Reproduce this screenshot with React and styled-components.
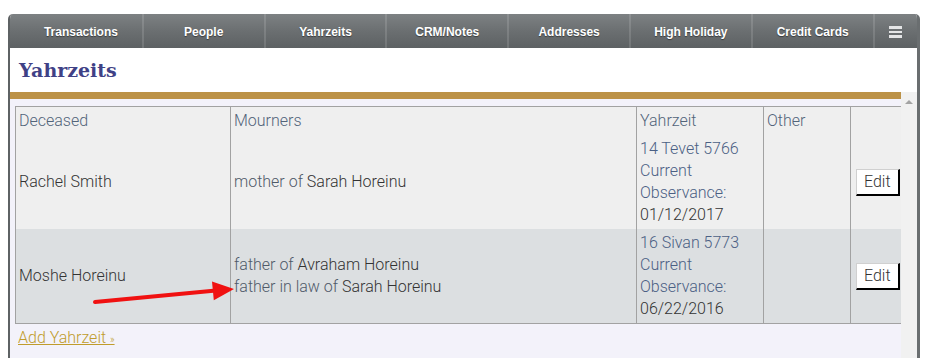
import React from 'react';
import styled, { createGlobalStyle } from 'styled-components';

const GlobalStyle = createGlobalStyle`
    html, body {
        margin:0;
        padding:0;
        background:#ffffff;
    }
    body {
        font-family: Roboto, "Liberation Sans", Arial, sans-serif;
    }
`;

const Page = styled.div`
    position:relative;
    padding:14px 9px 0 8px;
    height:358px;
    overflow:hidden;
    box-sizing:border-box;
`;

const Frame = styled.div`
    display:flex;
    flex-direction:column;
    border-left:2px solid #5e6264;
    border-right:3px solid #6a6e70;
    border-radius:5px 5px 0 0;
    overflow:hidden;
    height:380px;
    background:#ffffff;
`;

const NavBar = styled.div`
    display:flex;
    height:34px;
    padding-left:10px;
    background:linear-gradient(to bottom, #7d8183 0%, #6b6f71 50%, #5d6163 100%);
`;

const NavItem = styled.div`
    width:${props => props.grow ? 'auto' : '121.8px'};
    flex:${props => props.grow ? '1' : 'none'};
    box-sizing:border-box;
    display:flex;
    align-items:center;
    justify-content:center;
    padding-top:2px;
    border-left:${props => props.first ? 'none' : '2px solid rgba(255,255,255,0.13)'};
    color:#ffffff;
    font-family:"Liberation Sans", Arial, sans-serif;
    font-weight:bold;
    font-size:12px;
    text-shadow:0 1px 1px rgba(0,0,0,0.45);
`;

const Burger = styled.div`
    display:flex;
    flex-direction:column;
    gap:2px;
    span {
        display:block;
        width:13px;
        height:2.5px;
        background:#e4e5e6;
    }
`;

const Header = styled.div`
    height:44px;
    box-sizing:border-box;
    padding:9px 0 0 9px;
`;

const Title = styled.h1`
    margin:0;
    font-family:"DejaVu Serif", "Liberation Serif", serif;
    font-weight:bold;
    font-size:19px;
    line-height:26px;
    color:#3f4186;
`;

const Body = styled.div`
    display:flex;
    flex:1;
    min-height:0;
`;

const Content = styled.div`
    flex:1;
    min-width:0;
    overflow:hidden;
    border-top:7px solid #bc9247;
    background:#f3f2fa;
    padding:7px 0 0 5px;
`;

const ScrollBar = styled.div`
    width:16px;
    background:#f1f1f1;
    display:flex;
    justify-content:center;
    padding-top:8px;
    box-sizing:border-box;
`;

const ScrollArrow = styled.div`
    width:0;
    height:0;
    border-left:4px solid transparent;
    border-right:4px solid transparent;
    border-bottom:4px solid #a3a3a3;
`;

const Table = styled.table`
    border-collapse:collapse;
    table-layout:fixed;
    width:890px;
    border:1px solid #a2a2a2;
    font-family:Roboto, "Liberation Sans", sans-serif;
    font-weight:300;
    font-size:16px;
    line-height:22px;
    color:#333333;
`;

const Row = styled.tr`
    background:${props => props.alt ? '#dcdfe1' : '#efefef'};
`;

const HeadCell = styled.td`
    border-left:1px solid #a2a2a2;
    padding:3px 3px;
    vertical-align:top;
    color:#52647a;
    &:first-child { border-left:none; }
`;

const Cell = styled.td`
    border-left:1px solid #a2a2a2;
    padding:3px 3px;
    vertical-align:${props => props.top ? 'top' : 'middle'};
    &:first-child { border-left:none; }
`;

const Relation = styled.span`
    color:#4f5a69;
`;

const Hebrew = styled.div`
    color:#4b6084;
`;

const EditButton = styled.button`
    font-family:Roboto, "Liberation Sans", sans-serif;
    font-weight:300;
    font-size:16px;
    color:#333;
    background:#ffffff;
    border-top:1px solid #d0d0d0;
    border-left:1px solid #d0d0d0;
    border-right:2px solid #000000;
    border-bottom:2px solid #000000;
    padding:0 7px;
    height:27px;
    margin-left:2px;
    cursor:pointer;
`;

const AddLink = styled.a`
    display:inline-block;
    margin:3px 0 0 3px;
    font-family:Roboto, "Liberation Sans", sans-serif;
    font-weight:300;
    font-size:16px;
    line-height:22px;
    color:#c09c2c;
    text-decoration:underline;
    small { font-size:10px; }
`;

const Arrow = styled.svg`
    position:absolute;
    left:0;
    top:0;
    pointer-events:none;
`;

const navItems = ['Transactions', 'People', 'Yahrzeits', 'CRM/Notes', 'Addresses', 'High Holiday', 'Credit Cards'];

const yahrzeits = [
    {
        deceased: 'Rachel Smith',
        mourners: [{ relation: 'mother of', name: 'Sarah Horeinu' }],
        hebrew: '14 Tevet 5766',
        observance: '01/12/2017',
    },
    {
        deceased: 'Moshe Horeinu',
        mourners: [
            { relation: 'father of', name: 'Avraham Horeinu' },
            { relation: 'father in law of', name: 'Sarah Horeinu' },
        ],
        hebrew: '16 Sivan 5773',
        observance: '06/22/2016',
    },
];

const App = () => {
    return (
        <Page>
            <GlobalStyle />
            <Frame>
                <NavBar>
                    {navItems.map((item, i) => (
                        <NavItem key={item} first={i === 0}>{item}</NavItem>
                    ))}
                    <NavItem grow>
                        <Burger><span /><span /><span /></Burger>
                    </NavItem>
                </NavBar>
                <Header>
                    <Title>Yahrzeits</Title>
                </Header>
                <Body>
                    <Content>
                        <Table>
                            <colgroup>
                                <col style={{ width: '215px' }} />
                                <col style={{ width: '406px' }} />
                                <col style={{ width: '127px' }} />
                                <col style={{ width: '87px' }} />
                                <col style={{ width: '55px' }} />
                            </colgroup>
                            <tbody>
                                <Row>
                                    <HeadCell>Deceased</HeadCell>
                                    <HeadCell>Mourners</HeadCell>
                                    <HeadCell>Yahrzeit</HeadCell>
                                    <HeadCell>Other</HeadCell>
                                    <HeadCell></HeadCell>
                                </Row>
                                {yahrzeits.map((y, i) => (
                                    <Row key={y.deceased} alt={i % 2 === 1}>
                                        <Cell>{y.deceased}</Cell>
                                        <Cell>
                                            {y.mourners.map(m => (
                                                <div key={m.relation}>
                                                    <Relation>{m.relation}</Relation> {m.name}
                                                </div>
                                            ))}
                                        </Cell>
                                        <Cell top>
                                            <Hebrew>{y.hebrew}</Hebrew>
                                            <Hebrew>Current Observance:</Hebrew>
                                            <div>{y.observance}</div>
                                        </Cell>
                                        <Cell></Cell>
                                        <Cell><EditButton>Edit</EditButton></Cell>
                                    </Row>
                                ))}
                            </tbody>
                        </Table>
                        <AddLink href="#">Add Yahrzeit <small>»</small></AddLink>
                    </Content>
                    <ScrollBar><ScrollArrow /></ScrollBar>
                </Body>
            </Frame>
            {/* annotation arrow pointing at the in-law mourner */}
            <Arrow width="929" height="358" viewBox="0 0 929 358">
                <line x1="95" y1="302" x2="216" y2="290.6" stroke="#f01111" strokeWidth="4" strokeLinecap="round" />
                <polygon points="234,289 212,281.6 213.8,300.2" fill="#f01111" />
            </Arrow>
        </Page>
    );
};

export default App;
